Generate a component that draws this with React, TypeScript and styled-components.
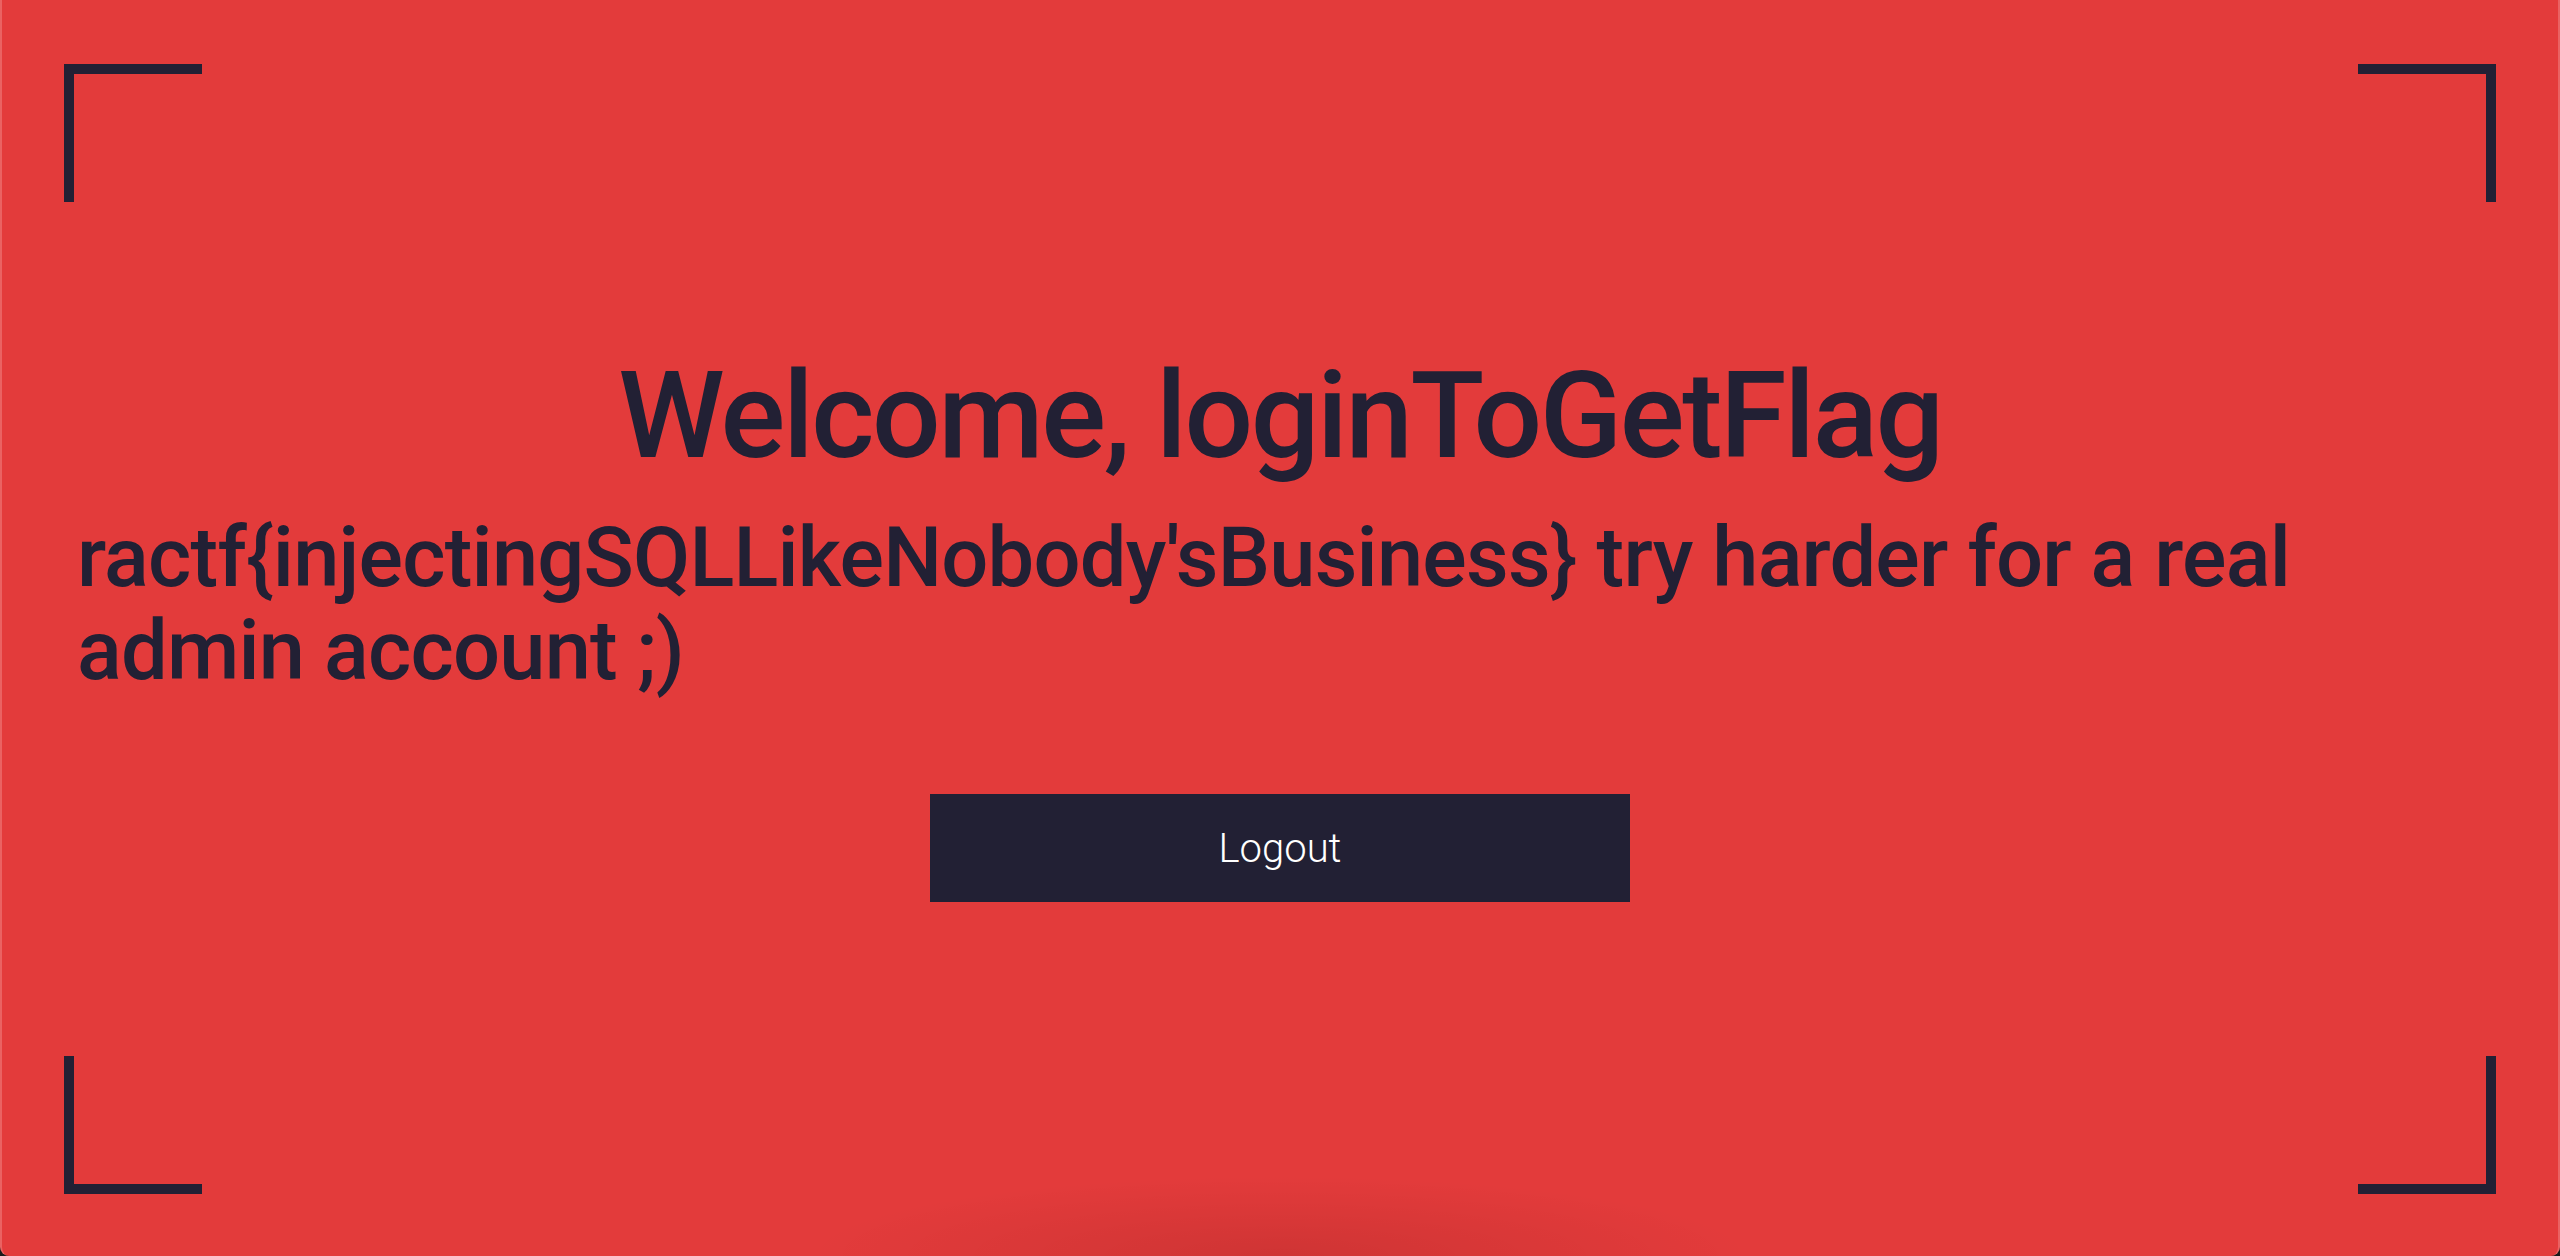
import React from "react";
import styled, { createGlobalStyle } from "styled-components";

const Global = createGlobalStyle`
  html, body {
    margin: 0;
    padding: 0;
    background: #1a1a1a;
    height: 100%;
  }
  #root { height: 100%; }
  * { box-sizing: border-box; }
`;

const Card = styled.main`
  position: relative;
  width: 100vw;
  height: 100vh;
  background:
    radial-gradient(ellipse 470px 80px at 50% 100%, rgba(60, 0, 0, 0.12), rgba(60, 0, 0, 0) 100%),
    #e33b3b;
  border-left: 2px solid #ea6262;
  border-right: 2px solid #ea6262;
  border-radius: 0 0 9px 9px;
  display: flex;
  flex-direction: column;
  align-items: center;
  justify-content: center;
  padding: 0 75px 10px;
  font-family: Roboto, "Noto Sans CJK KR", sans-serif;
  color: #222034;
`;

const Corner = styled.span<{ $v: "top" | "bottom"; $h: "left" | "right" }>`
  position: absolute;
  width: 138px;
  height: 138px;
  ${(p) => (p.$v === "top" ? "top: 64px;" : "bottom: 62px;")}
  ${(p) => (p.$h === "left" ? "left: 62px;" : "right: 62px;")}
  border-${(p) => p.$v}: 10px solid #222034;
  border-${(p) => p.$h}: 10px solid #222034;
`;

const Title = styled.h1`
  margin: 0 0 22px;
  font-size: 121px;
  font-weight: 500;
  line-height: 1.2;
  letter-spacing: -2.4px;
  text-align: center;
`;

const Message = styled.p`
  align-self: stretch;
  margin: 0;
  font-size: 83px;
  font-weight: 500;
  line-height: 93px;
  letter-spacing: -0.8px;
  text-align: left;
`;

const LogoutButton = styled.button`
  margin-top: 97px;
  width: 700px;
  height: 108px;
  border: none;
  background: #222034;
  color: #ffffff;
  font-family: Roboto, "Noto Sans CJK KR", sans-serif;
  font-size: 40px;
  font-weight: 300;
  cursor: pointer;
`;

export default function App() {
  return (
    <>
      <Global />
      <Card>
        <Corner $v="top" $h="left" />
        <Corner $v="top" $h="right" />
        <Corner $v="bottom" $h="left" />
        <Corner $v="bottom" $h="right" />
        <Title>Welcome, loginToGetFlag</Title>
        <Message>
          ractf{"{"}injectingSQLLikeNobody'sBusiness{"}"} try harder for a real admin account ;)
        </Message>
        <LogoutButton>Logout</LogoutButton>
      </Card>
    </>
  );
}
